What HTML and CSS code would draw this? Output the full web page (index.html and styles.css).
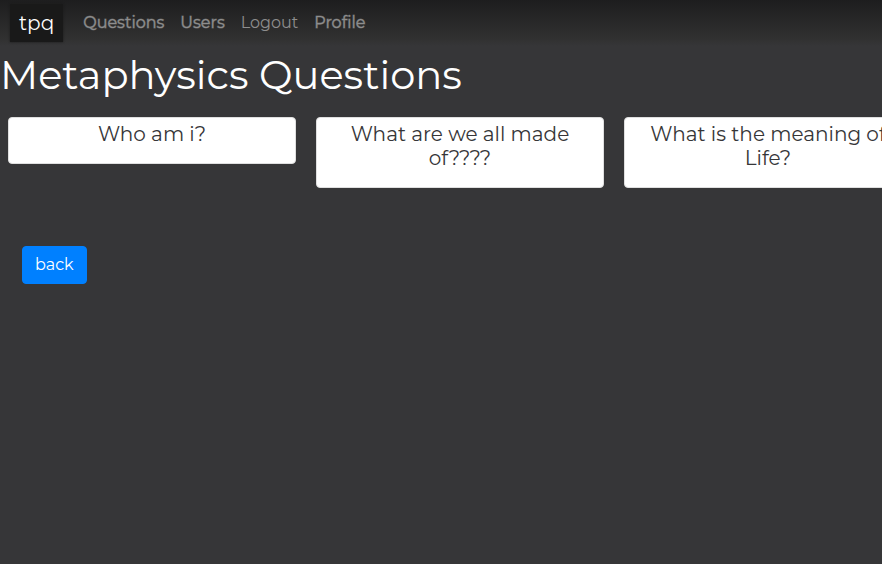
FILE: index.html
```html
<!DOCTYPE html>
<html lang="en">
<head>
<meta charset="utf-8">
<meta name="viewport" content="width=device-width, initial-scale=1">
<title>Metaphysics Questions</title>
<link rel="stylesheet" href="styles.css">
</head>
<body>
<nav class="navbar">
  <a class="brand" href="#">tpq</a>
  <ul class="nav-list">
    <li><a class="nav-link strong" href="#">Questions</a></li>
    <li><a class="nav-link strong" href="#">Users</a></li>
    <li><a class="nav-link" href="#">Logout</a></li>
    <li><a class="nav-link strong" href="#">Profile</a></li>
  </ul>
</nav>
<main>
  <h1 class="title">Metaphysics Questions</h1>
  <div class="deck">
    <article class="card"><h2 class="card-title">Who am i?</h2></article>
    <article class="card"><h2 class="card-title">What are we all made of????</h2></article>
    <article class="card"><h2 class="card-title">What is the meaning of Life?</h2></article>
  </div>
  <button class="back" type="button">back</button>
</main>
</body>
</html>
```
FILE: styles.css
```css
* {
  box-sizing: border-box;
}

body {
  margin: 0;
  min-height: 100vh;
  overflow-x: hidden;
  background: #363638;
  color: #fff;
  font-family: Montserrat, Inter, sans-serif;
  font-size: 16px;
  font-weight: 400;
  line-height: 24px;
}

.navbar {
  display: flex;
  align-items: center;
  gap: 12px;
  padding: 4px 10px;
  background: linear-gradient(#1d1d1e, #313131 85%, #363638);
}

.brand {
  padding: 4px 9px;
  background: #191919;
  box-shadow: 0 0 2px #191919;
  color: #fff;
  font-size: 20px;
  line-height: 30px;
  text-decoration: none;
}

.nav-list {
  display: flex;
  margin: 0;
  padding: 0;
  list-style: none;
}

.nav-link {
  display: block;
  padding: 0 8px;
  color: #8e8e8e;
  text-decoration: none;
}

.strong {
  -webkit-text-stroke: 1px rgb(142 142 142 / 50%);
}

.title {
  margin: 4px 0 18px;
  font-size: 40px;
  font-weight: 400;
  line-height: 49px;
}

.deck {
  display: flex;
  align-items: flex-start;
  gap: 20px;
  min-height: 129px;
  padding: 0 8px;
}

.card {
  flex: 0 0 288px;
  padding: 4px 20px 17px;
  border: 1px solid #dfdfdf;
  border-radius: 4px;
  background: #fff;
  color: #363638;
}

.card-title {
  margin: 0;
  font-size: 20px;
  font-weight: 400;
  line-height: 24px;
  text-align: center;
}

.back {
  margin-left: 22px;
  padding: 6px 12px;
  border: 1px solid #0080ff;
  border-radius: 4px;
  background: #0080ff;
  color: #fff;
  font: inherit;
}
```
